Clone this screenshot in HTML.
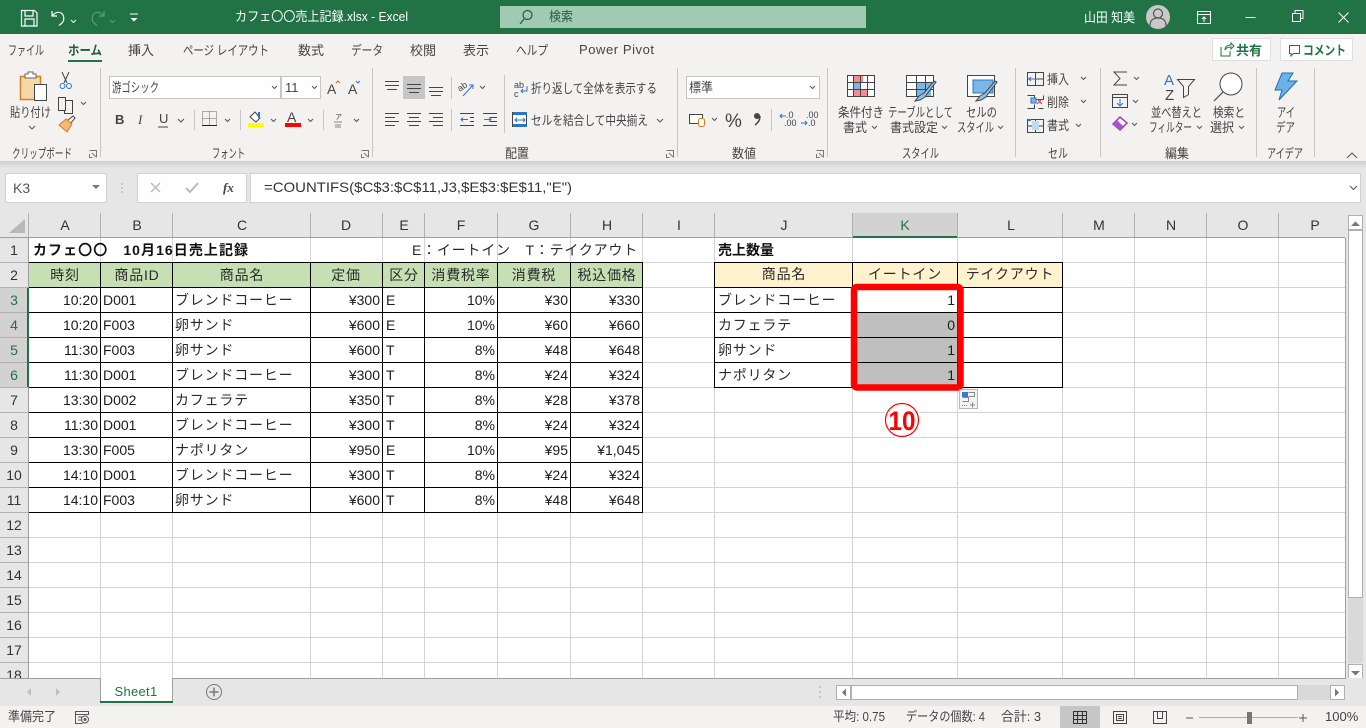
<!DOCTYPE html>
<html lang="ja"><head><meta charset="utf-8"><title>Excel</title>
<style>
html,body{margin:0;padding:0;width:1366px;height:728px;overflow:hidden;background:#e6e6e6}
svg{display:block}
text{font-family:"Liberation Sans","Noto Sans CJK JP",sans-serif;font-size:13px;fill:#444}
.t text{fill:#fff}
.c text{font-size:14px;fill:#1c1c1c}
.j text,text.j{font-family:"Liberation Sans","Noto Sans CJK JP",sans-serif;font-size:14px;letter-spacing:.8px;fill:#2a2a2a}
.r text{text-anchor:end}
.m text,text.m{text-anchor:middle}
.h text{font-size:14px;fill:#333;text-anchor:middle}
.ic{fill:none;stroke:#444;stroke-width:1}
.caret{fill:none;stroke:#555;stroke-width:1}
</style></head><body>
<svg xmlns="http://www.w3.org/2000/svg" width="1366" height="728" viewBox="0 0 1366 728">
<defs><linearGradient id="sh" x1="0" y1="0" x2="0" y2="1"><stop offset="0" stop-color="#cfcfcf"/><stop offset="1" stop-color="#e6e6e6"/></linearGradient></defs>
<!-- title bar -->
<rect width="1366" height="34" fill="#217346"/>
<g fill="none" stroke="#fff" stroke-width="1.2">
<path d="M21.5 10.5h13l2.500 2.500v13h-15.500z M25 10.500v5.500h8v-5.500 M25 26v-7h9v7"/>
<path d="M52 11v5h5 M52 16c3-3.500 6-4.500 9-3 3.500 2 3.500 7.500 1 10l-3 2.500"/>
<path d="M71 20l2.500 2.500 2.500-2.500" stroke-width="1"/>
<g stroke="#5f9a78"><path d="M104 11v5h-5 M104 16c-3-3.500-6-4.500-9-3-3.500 2-3.500 7.500-1 10l3 2.500"/><path d="M110 20l2.500 2.500 2.500-2.500" stroke-width="1"/></g>
<path d="M130 14h8" stroke-width="1"/><path d="M130.500 18l3.500 3.500 3.500-3.500z" fill="#fff" stroke="none"/>
</g>
<g class="t">
<text x="235" y="21" textLength="173" lengthAdjust="spacingAndGlyphs">カフェ〇〇売上記録.xlsx  -  Excel</text>
<rect x="500" y="6" width="366" height="22" fill="#a0cbb2"/>
<text x="549" y="21" textLength="24" lengthAdjust="spacingAndGlyphs" style="fill:#2a5a40">検索</text>
<text x="1084" y="22" textLength="51" lengthAdjust="spacingAndGlyphs">山田 知美</text>
</g>
<g fill="none" stroke="#235a3c" stroke-width="1.200"><circle cx="527.500" cy="15" r="4.500"/><path d="M524 19l-4 5"/></g>
<circle cx="1158" cy="17" r="12" fill="#c8c8c8"/>
<g fill="none" stroke="#555" stroke-width="1.200"><circle cx="1158" cy="13.500" r="4.500"/><path d="M1150 26c0-6 3-8 8-8s8 2 8 8"/></g>
<g fill="none" stroke="#fff" stroke-width="1">
<path d="M1197.500 11.500h13v12h-13z M1197.500 14.500h13 M1204 22v-5 M1202 19l2-2 2 2"/>
<path d="M1245.500 17.500h10"/>
<path d="M1292.500 13.500h8v8h-8z M1295 13v-2.500h8v8h-2.500"/>
<path d="M1338.500 12.500l10 10 M1348.500 12.500l-10 10"/>
</g>
<!-- ribbon -->
<rect y="34" width="1366" height="127" fill="#f3f2f1"/>
<rect y="161" width="1366" height="7" fill="url(#sh)"/>
<text x="8" y="55" textLength="36" lengthAdjust="spacingAndGlyphs">ファイル</text>
<text x="68" y="55" textLength="34" lengthAdjust="spacingAndGlyphs" font-weight="700" style="fill:#235c3d">ホーム</text>
<rect x="68" y="60" width="34" height="2" fill="#217346"/>
<text x="128" y="55" textLength="26" lengthAdjust="spacingAndGlyphs">挿入</text>
<text x="183" y="55" textLength="86" lengthAdjust="spacingAndGlyphs">ページ レイアウト</text>
<text x="298" y="55" textLength="26" lengthAdjust="spacingAndGlyphs">数式</text>
<text x="351" y="55" textLength="32" lengthAdjust="spacingAndGlyphs">データ</text>
<text x="410" y="55" textLength="26" lengthAdjust="spacingAndGlyphs">校閲</text>
<text x="463" y="55" textLength="26" lengthAdjust="spacingAndGlyphs">表示</text>
<text x="516" y="55" textLength="32" lengthAdjust="spacingAndGlyphs">ヘルプ</text>
<text x="579" y="54" textLength="75" lengthAdjust="spacing" style="font-size:13px">Power Pivot</text>
<rect x="1212.500" y="38.500" width="58" height="22" fill="#fff" stroke="#e1dfdd"/>
<rect x="1280.500" y="38.500" width="72" height="22" fill="#fff" stroke="#e1dfdd"/>
<path d="M1221 47v9h9v-5 M1225 50c0-3 2-5 6-5v-2l3 3-3 3v-2c-3 0-5 1-6 3z" fill="none" stroke="#217346"/>
<text x="1236" y="55" textLength="26" lengthAdjust="spacingAndGlyphs" font-weight="700" style="fill:#217346">共有</text>
<path d="M1289.500 45.500h10v8h-6l-2.500 2.500v-2.500h-1.500z" fill="none" stroke="#217346"/>
<text x="1303" y="55" textLength="43" lengthAdjust="spacingAndGlyphs" font-weight="700" style="fill:#217346">コメント</text>
<!-- separators -->
<g stroke="#c8c6c4"><path d="M100.500 68v89 M372.500 68v89 M677.500 68v89 M827.500 68v89 M1015.500 68v89 M1100.500 68v89 M1256.500 68v89 M1314.500 68v89"/>
<path d="M194.500 110v20 M240.500 110v20 M323.500 110v20 M451.500 77v22 M451.500 109v22 M504.500 75v58 M771.500 109v22"/></g>
<!-- group labels -->
<text x="12" y="158" textLength="60" lengthAdjust="spacingAndGlyphs">クリップボード</text>
<text x="212" y="158" textLength="33" lengthAdjust="spacingAndGlyphs">フォント</text>
<text x="505" y="158" textLength="24" lengthAdjust="spacingAndGlyphs">配置</text>
<text x="732" y="158" textLength="24" lengthAdjust="spacingAndGlyphs">数値</text>
<text x="902" y="158" textLength="37" lengthAdjust="spacingAndGlyphs">スタイル</text>
<text x="1048" y="158" textLength="20" lengthAdjust="spacingAndGlyphs">セル</text>
<text x="1165" y="158" textLength="24" lengthAdjust="spacingAndGlyphs">編集</text>
<text x="1267" y="158" textLength="36" lengthAdjust="spacingAndGlyphs">アイデア</text>
<g fill="none" stroke="#777"><path d="M89.500 150.500h7v7 M92 153l4 4M89.500 154v3.500h3"/><path d="M361.500 150.500h7v7 M364 153l4 4M361.500 154v3.500h3"/><path d="M666.500 150.500h7v7 M669 153l4 4M666.500 154v3.500h3"/><path d="M816.500 150.500h7v7 M819 153l4 4M816.500 154v3.500h3"/></g>
<path d="M1347 158l5-5 5 5" class="caret" stroke-width="1.200"/>
<!-- clipboard -->
<rect x="20.500" y="76.500" width="20" height="23" fill="#f4d9a8" stroke="#d67f1f" stroke-width="1.500"/>
<path d="M25 76v-2h3v-2h5v2h3v4h-11z" fill="#fff" stroke="#666"/>
<rect x="34.500" y="84.500" width="12" height="16" fill="#fff" stroke="#444"/>
<text x="10" y="117" textLength="41" lengthAdjust="spacingAndGlyphs">貼り付け</text>
<path d="M29 126l3 3 3-3" class="caret"/>
<path d="M62 72l5 11 M69 72l-5 11" class="ic"/><circle cx="62.500" cy="86" r="2.500" fill="none" stroke="#2a77c9"/><circle cx="69" cy="86" r="2.500" fill="none" stroke="#2a77c9"/>
<path d="M58.500 97.500h7v13h-7z M65.500 100.500h7v13h-8v-3" class="ic"/><path d="M81 102l2.500 2.500 2.500-2.500" class="caret"/>
<path d="M59 125l7-6 6 5-5 8z" fill="#f7b977" stroke="#d67f1f"/><path d="M68 120l5-4 2 2-4 5" fill="none" stroke="#444"/>
<!-- font -->
<rect x="109.500" y="76.500" width="171" height="22" fill="#fff" stroke="#c8c6c4"/>
<rect x="281.500" y="76.500" width="39" height="22" fill="#fff" stroke="#c8c6c4"/>
<text x="112" y="92" textLength="47" lengthAdjust="spacingAndGlyphs">游ゴシック</text>
<text x="285" y="92" style="font-size:13px">11</text>
<path d="M272 86l2.500 2.500 2.500-2.500 M312 86l2.500 2.500 2.500-2.500" class="caret"/>
<text x="327" y="94" style="font-size:14px">A</text><text x="348" y="94" style="font-size:14px">A</text>
<path d="M336 83l2-2 2 2" fill="none" stroke="#c36a1a"/><path d="M356 81l2 2 2-2" fill="none" stroke="#2a77c9"/>
<text x="115" y="124" font-weight="700" style="font-size:13px">B</text>
<text x="138" y="124" font-style="italic" style="font-family:'Liberation Serif',serif;font-size:13px">I</text>
<text x="159" y="123" style="font-size:13px">U</text><path d="M158 127h10" stroke="#444"/>
<path d="M178 119l3 3 3-3 M225 119l2.500 2.500 2.500-2.500 M271 119l2.500 2.500 2.500-2.500 M308 119l2.500 2.500 2.500-2.500 M354 119l2.500 2.500 2.500-2.500" class="caret"/>
<path d="M202.500 111.500h14v14h-14z M209.500 111.500v14 M202.500 118.500h14" fill="none" stroke="#666" stroke-dasharray="1 1"/><path d="M202 125.500h15" stroke="#222"/>
<path d="M250 117l5-5 5 6-4 4z" fill="#fff" stroke="#444"/><path d="M259 112v6" stroke="#2a77c9" stroke-width="2"/><rect x="248" y="123" width="16" height="4" fill="#ffff00"/>
<text x="287" y="122" style="font-size:14px">A</text><rect x="285" y="123" width="16" height="4" fill="#ff0000"/>
<text x="335" y="119" style="font-size:7px">ア</text><path d="M334 122h8 M335 125h6 M335 127h6" stroke="#888"/>
<!-- align -->
<rect x="403" y="76" width="22" height="23" fill="#c6c6c6"/>
<g stroke="#444"><path d="M385 81.500h14 M385 85.500h14 M387 89.500h10"/><path d="M407 84.500h14 M407 88.500h14 M409 92.500h10"/><path d="M429 87.500h14 M429 91.500h14 M431 95.500h10"/>
<path d="M385 113.500h14 M385 117.500h10 M385 121.500h14 M385 125.500h10"/><path d="M407 113.500h14 M409 117.500h10 M407 121.500h14 M409 125.500h10"/><path d="M429 113.500h14 M433 117.500h10 M429 121.500h14 M433 125.500h10"/>
<path d="M460 113.500h14 M474 125.500h-14 M474 117.500h-4 M474 121.500h-4" /><path d="M483 113.500h14 M483 125.500h14 M490 117.500h7 M490 121.500h7"/></g>
<path d="M468 119.500h-7m2-2-2 2 2 2" fill="none" stroke="#2a77c9"/><path d="M484 119.500h7m-2-2 2 2-2 2" fill="none" stroke="#2a77c9"/>
<text x="458" y="90" style="font-size:9px" transform="rotate(-35 462 88)">ab</text><path d="M463 96l10-11m-4 0h4v4" fill="none" stroke="#2a77c9"/>
<path d="M480 86l2.500 2.500 2.500-2.500" class="caret"/>
<text x="514" y="88" style="font-size:9px">ab</text><text x="514" y="97" style="font-size:9px">c</text><path d="M527 86v5h-6m2-2-2 2 2 2" fill="none" stroke="#2a77c9"/>
<text x="531" y="93" textLength="126" lengthAdjust="spacingAndGlyphs">折り返して全体を表示する</text>
<rect x="512.500" y="112.500" width="14" height="14" fill="#fff" stroke="#444"/><rect x="513" y="112" width="14" height="3" fill="#2a77c9"/><rect x="513" y="124" width="14" height="3" fill="#2a77c9"/><path d="M515 120h10m-2-2 2 2-2 2m-6-4-2 2 2 2" fill="none" stroke="#2a77c9"/>
<text x="531" y="125" textLength="117" lengthAdjust="spacingAndGlyphs">セルを結合して中央揃え</text>
<path d="M657 119l3 3 3-3" class="caret"/>
<!-- number -->
<rect x="686.500" y="76.500" width="133" height="22" fill="#fff" stroke="#c8c6c4"/>
<text x="689" y="92" textLength="24" lengthAdjust="spacingAndGlyphs">標準</text>
<path d="M810 86l2.500 2.500 2.500-2.500 M712 118l2.500 2.500 2.500-2.500" class="caret"/>
<rect x="689.500" y="114.500" width="13" height="9" fill="#fff" stroke="#444"/><rect x="698.500" y="118.500" width="6" height="8" rx="2" fill="#fff" stroke="#d67f1f"/>
<text x="725" y="127" style="font-size:19px">%</text>
<circle cx="757" cy="116" r="3" fill="#444"/><path d="M760 116c0 4-2 7-5 9" fill="none" stroke="#444" stroke-width="1.500"/>
<text x="786" y="118" style="font-size:9px">.0</text><text x="784" y="126" style="font-size:9px">.00</text><path d="M786 116h-6m2-2-2 2 2 2" fill="none" stroke="#2a77c9"/>
<text x="806" y="118" style="font-size:9px">.00</text><text x="808" y="126" style="font-size:9px">.0</text><path d="M801 123h6m-2-2 2 2-2 2" fill="none" stroke="#2a77c9"/>
<!-- styles -->
<g fill="none" stroke="#444">
<rect x="847.500" y="75.500" width="27" height="21" fill="#fff"/><rect x="853" y="76" width="10" height="6.500" fill="#f58a92" stroke="none"/><rect x="853" y="89" width="14" height="7" fill="#f58a92" stroke="none"/><rect x="853" y="83" width="7" height="6" fill="#7bb6e8" stroke="none"/><rect x="847.500" y="75.500" width="27" height="21"/><path d="M847.500 82.500h27 M847.500 89.500h27 M853.500 75.500v21 M860.500 75.500v21 M867.500 75.500v21"/>
<rect x="906.500" y="75.500" width="27" height="21" fill="#fff"/><rect x="916" y="83" width="15" height="13" fill="#7bb6e8" stroke="none"/><path d="M906.500 82.500h27 M906.500 89.500h27 M916.500 75.500v21 M925.500 75.500v21"/>
<rect x="967.500" y="75.500" width="27" height="21" fill="#fff"/><rect x="973" y="80" width="20" height="13" fill="#7bb6e8" stroke="#2a77c9"/>
</g>
<path d="M936 82l-2-1-10 12-5 3-4 5 5-1 5-3 2-3z" fill="#8ec1ea" stroke="#444"/>
<path d="M997 82l-2-1-10 12-5 3-4 5 5-1 5-3 2-3z" fill="#8ec1ea" stroke="#444"/>
<text x="838" y="117" textLength="46" lengthAdjust="spacingAndGlyphs">条件付き</text>
<text x="843" y="132" textLength="24" lengthAdjust="spacingAndGlyphs">書式</text>
<text x="888" y="117" textLength="65" lengthAdjust="spacingAndGlyphs">テーブルとして</text>
<text x="890" y="132" textLength="48" lengthAdjust="spacingAndGlyphs">書式設定</text>
<text x="966" y="117" textLength="31" lengthAdjust="spacingAndGlyphs">セルの</text>
<text x="957" y="132" textLength="37" lengthAdjust="spacingAndGlyphs">スタイル</text>
<path d="M872 126l2.500 2.500 2.500-2.500 M942 126l2.500 2.500 2.500-2.500 M998 126l2.500 2.500 2.500-2.500" class="caret"/>
<!-- cells -->
<g fill="none" stroke="#444"><path d="M1027.500 72.500h16v13h-16z M1027.500 79h16 M1035.500 72.500v13"/><path d="M1027.500 95.500h7v4h9v-4h-0 M1027.500 108.500h7v-4 M1043.500 108.500h-5"/><rect x="1027.500" y="119.500" width="16" height="13"/><path d="M1027.500 126h16 M1035.500 119.500v13"/></g>
<rect x="1028" y="119" width="3" height="2" fill="#2a77c9"/>
<path d="M1036 79h-7m2-2-2 2 2 2" fill="none" stroke="#2a77c9"/><rect x="1031" y="98" width="5" height="5" fill="#7bb6e8" stroke="#2a77c9"/><path d="M1037 99l5 5m0-5l-5 5" stroke="#e04040"/><rect x="1032" y="121" width="7" height="9" fill="#bcdcf4"/>
<text x="1047" y="84" textLength="22" lengthAdjust="spacingAndGlyphs">挿入</text>
<text x="1047" y="107" textLength="22" lengthAdjust="spacingAndGlyphs">削除</text>
<text x="1047" y="130" textLength="22" lengthAdjust="spacingAndGlyphs">書式</text>
<path d="M1081 77l2.500 2.500 2.500-2.500 M1081 100l2.500 2.500 2.500-2.500 M1076 124l2.500 2.500 2.500-2.500" class="caret"/>
<!-- editing -->
<path d="M1127 72h-13l6 6.500-6 6.500h13" class="ic"/>
<path d="M1112.500 94.500h15v13h-15z M1112.500 97.500h15" class="ic"/><path d="M1120 99v7m-3-3 3 3 3-3" fill="none" stroke="#2a77c9"/>
<path d="M1113 124l7-7 7 6-7 7z" fill="#fff" stroke="#9b3fb5" stroke-width="1.500"/><path d="M1113 124l4-4 6 6-3 4z" fill="#b04fd0"/>
<path d="M1134 77l2.500 2.500 2.500-2.500 M1133 100l2.500 2.500 2.500-2.500 M1132 123l2.500 2.500 2.500-2.500" class="caret"/>
<text x="1164" y="85" style="font-size:15px;fill:#2a77c9">A</text><text x="1165" y="100" style="font-size:15px">Z</text>
<path d="M1177.500 79.500h17l-6 7v8l-5 3v-11z" class="ic"/>
<text x="1151" y="117" textLength="51" lengthAdjust="spacingAndGlyphs">並べ替えと</text>
<text x="1149" y="132" textLength="43" lengthAdjust="spacingAndGlyphs">フィルター</text>
<circle cx="1231" cy="84" r="11" fill="#fff" stroke="#444"/><path d="M1223 92l-9 9" stroke="#444" stroke-width="1.200"/>
<text x="1213" y="117" textLength="32" lengthAdjust="spacingAndGlyphs">検索と</text>
<text x="1210" y="132" textLength="24" lengthAdjust="spacingAndGlyphs">選択</text>
<path d="M1197 126l2.500 2.500 2.500-2.500 M1239 126l2.500 2.500 2.500-2.500" class="caret"/>
<path d="M1290 73h-8l-7 17h7l-3 10 18-19h-9l5-8z" fill="#6cb1ea" stroke="#1f6fb8"/>
<text x="1277" y="117" textLength="18" lengthAdjust="spacingAndGlyphs">アイ</text>
<text x="1276" y="132" textLength="19" lengthAdjust="spacingAndGlyphs">デア</text>
<!-- formula bar -->
<rect x="5.500" y="173.500" width="101" height="29" fill="#fff" stroke="#d0d0d0"/>
<text x="13" y="193" style="font-size:14px;fill:#555">K3</text>
<path d="M92 185h8l-4 4z" fill="#777"/>
<path d="M122 183v2 M122 187v2 M122 191v2" stroke="#aaa"/>
<rect x="137.500" y="173.500" width="109" height="29" fill="#fff" stroke="#d0d0d0"/>
<path d="M151 183l9 9 M160 183l-9 9" stroke="#bbb" stroke-width="1.500"/>
<path d="M186 188l4 4 8-9" fill="none" stroke="#bbb" stroke-width="2"/>
<text x="223" y="192" font-style="italic" font-weight="700" style="font-family:'Liberation Serif',serif;font-size:13px">fx</text>
<rect x="250.500" y="173.500" width="1110" height="29" fill="#fff" stroke="#d0d0d0"/>
<text x="264" y="192" textLength="308" lengthAdjust="spacingAndGlyphs" style="font-size:14px;fill:#333">=COUNTIFS($C$3:$C$11,J3,$E$3:$E$11,"E")</text>
<path d="M1350 186l3.500 3.500 3.500-3.500" class="caret"/>
<!-- sheet -->
<rect x="29" y="238" width="1316" height="440" fill="#fff"/>
<rect x="0" y="213" width="1346" height="25" fill="#e6e6e6"/>
<rect x="0" y="238" width="28" height="440" fill="#e6e6e6"/>
<path d="M25 233h-16l16-14z" fill="#b8b8b8"/>
<rect x="853" y="213" width="104" height="24" fill="#d2d2d2"/>
<rect x="0" y="288" width="28" height="99" fill="#d2d2d2"/>
<!-- gridlines -->
<g stroke="#d4d4d4" shape-rendering="crispEdges">
<path d="M29 262.500h1316 M29 287.500h1316 M29 312.500h1316 M29 337.500h1316 M29 362.500h1316 M29 387.500h1316 M29 412.500h1316 M29 437.500h1316 M29 462.500h1316 M29 487.500h1316 M29 512.500h1316 M29 537.500h1316 M29 562.500h1316 M29 587.500h1316 M29 612.500h1316 M29 637.500h1316 M29 662.500h1316"/>
<path d="M100.500 238v440 M172.500 238v440 M310.500 238v440 M382.500 238v440 M424.500 238v440 M497.500 238v440 M570.500 238v440 M642.500 238v440 M714.500 238v440 M852.500 238v440 M957.500 238v440 M1062.500 238v440 M1134.500 238v440 M1206.500 238v440 M1278.500 238v440"/>
</g>
<g stroke="#b0b0b0" shape-rendering="crispEdges">
<path d="M28.500 213v25 M100.500 213v24 M172.500 213v24 M310.500 213v24 M382.500 213v24 M424.500 213v24 M497.500 213v24 M570.500 213v24 M642.500 213v24 M714.500 213v24 M852.500 213v24 M957.500 213v24 M1062.500 213v24 M1134.500 213v24 M1206.500 213v24 M1278.500 213v24"/>
<path d="M0 262.500h28 M0 287.500h28 M0 312.500h28 M0 337.500h28 M0 362.500h28 M0 387.500h28 M0 412.500h28 M0 437.500h28 M0 462.500h28 M0 487.500h28 M0 512.500h28 M0 537.500h28 M0 562.500h28 M0 587.500h28 M0 612.500h28 M0 637.500h28 M0 662.500h28"/>
</g>
<path d="M0 237.500h1345 M28.500 238v440 M1345.500 238v440" stroke="#9f9f9f" shape-rendering="crispEdges"/>
<rect x="853" y="236" width="104" height="2" fill="#217346"/>
<rect x="27" y="288" width="2" height="99" fill="#217346"/>
<!-- headers -->
<g class="h">
<text x="65" y="230">A</text><text x="137" y="230">B</text><text x="242" y="230">C</text><text x="346" y="230">D</text><text x="404" y="230">E</text><text x="461" y="230">F</text><text x="534" y="230">G</text><text x="607" y="230">H</text><text x="679" y="230">I</text><text x="784" y="230">J</text><text x="905" y="230" style="fill:#217346">K</text><text x="1011" y="230">L</text><text x="1099" y="230">M</text><text x="1171" y="230">N</text><text x="1243" y="230">O</text><text x="1315" y="230">P</text>
<text x="14" y="255">1</text><text x="14" y="280">2</text><text x="14" y="305" style="fill:#217346">3</text><text x="14" y="330" style="fill:#217346">4</text><text x="14" y="355" style="fill:#217346">5</text><text x="14" y="380" style="fill:#217346">6</text><text x="14" y="405">7</text><text x="14" y="430">8</text><text x="14" y="455">9</text><text x="14" y="480">10</text><text x="14" y="505">11</text><text x="14" y="530">12</text><text x="14" y="555">13</text><text x="14" y="580">14</text><text x="14" y="605">15</text><text x="14" y="630">16</text><text x="14" y="655">17</text><text x="14" y="680">18</text>
</g>
<!-- table fills -->
<rect x="29" y="263" width="614" height="24" fill="#c6e0b4"/>
<rect x="715" y="263" width="347" height="24" fill="#fff2cc"/>
<rect x="29" y="288" width="614" height="224" fill="#fff"/>
<rect x="715" y="288" width="347" height="99" fill="#fff"/>
<rect x="853" y="313" width="104" height="74" fill="#bfbfbf"/>
<!-- table borders -->
<g stroke="#000" shape-rendering="crispEdges">
<path d="M29 262.500h614 M29 287.500h614 M29 312.500h614 M29 337.500h614 M29 362.500h614 M29 387.500h614 M29 412.500h614 M29 437.500h614 M29 462.500h614 M29 487.500h614 M29 512.500h614"/>
<path d="M100.500 262v251 M172.500 262v251 M310.500 262v251 M382.500 262v251 M424.500 262v251 M497.500 262v251 M570.500 262v251 M642.500 262v251"/>
<path d="M714 262.500h349 M714 287.500h349 M714 312.500h349 M714 337.500h349 M714 362.500h349 M714 387.500h349"/>
<path d="M714.500 262v126 M852.500 262v126 M957.500 262v126 M1062.500 262v126"/>
</g>
<!-- text: title rows -->
<text x="33" y="255" font-weight="700" textLength="215" lengthAdjust="spacing" style="font-size:14px;fill:#111">カフェ〇〇　10月16日売上記録</text>
<text x="412" y="255" textLength="226" class="j">E：イートイン　T：テイクアウト</text>
<text x="718" y="255" font-weight="700" style="font-size:14px;fill:#111">売上数量</text>
<g class="j m">
<text x="65" y="280">時刻</text><text x="137" y="280">商品ID</text><text x="242" y="280">商品名</text><text x="346" y="280">定価</text><text x="404" y="280">区分</text><text x="461" y="280">消費税率</text><text x="534" y="280">消費税</text><text x="607" y="280">税込価格</text>
<text x="784" y="279">商品名</text><text x="905" y="279">イートイン</text><text x="1010" y="279">テイクアウト</text>
</g>
<g class="c r"><text x="98" y="305">10:20</text><text x="98" y="330">10:20</text><text x="98" y="355">11:30</text><text x="98" y="380">11:30</text><text x="98" y="405">13:30</text><text x="98" y="430">11:30</text><text x="98" y="455">13:30</text><text x="98" y="480">14:10</text><text x="98" y="505">14:10</text></g>
<g class="c"><text x="103" y="305">D001</text><text x="103" y="330">F003</text><text x="103" y="355">F003</text><text x="103" y="380">D001</text><text x="103" y="405">D002</text><text x="103" y="430">D001</text><text x="103" y="455">F005</text><text x="103" y="480">D001</text><text x="103" y="505">F003</text></g>
<g class="j" transform="translate(0,.8)"><text x="175" y="304">ブレンドコーヒー</text><text x="175" y="329">卵サンド</text><text x="175" y="354">卵サンド</text><text x="175" y="379">ブレンドコーヒー</text><text x="175" y="404">カフェラテ</text><text x="175" y="429">ブレンドコーヒー</text><text x="175" y="454">ナポリタン</text><text x="175" y="479">ブレンドコーヒー</text><text x="175" y="504">卵サンド</text></g>
<g class="c r"><text x="380" y="305">¥300</text><text x="380" y="330">¥600</text><text x="380" y="355">¥600</text><text x="380" y="380">¥300</text><text x="380" y="405">¥350</text><text x="380" y="430">¥300</text><text x="380" y="455">¥950</text><text x="380" y="480">¥300</text><text x="380" y="505">¥600</text></g>
<g class="c"><text x="386" y="305">E</text><text x="386" y="330">E</text><text x="386" y="355">T</text><text x="386" y="380">T</text><text x="386" y="405">T</text><text x="386" y="430">T</text><text x="386" y="455">E</text><text x="386" y="480">T</text><text x="386" y="505">T</text></g>
<g class="c r"><text x="495" y="305">10%</text><text x="495" y="330">10%</text><text x="495" y="355">8%</text><text x="495" y="380">8%</text><text x="495" y="405">8%</text><text x="495" y="430">8%</text><text x="495" y="455">10%</text><text x="495" y="480">8%</text><text x="495" y="505">8%</text></g>
<g class="c r"><text x="568" y="305">¥30</text><text x="568" y="330">¥60</text><text x="568" y="355">¥48</text><text x="568" y="380">¥24</text><text x="568" y="405">¥28</text><text x="568" y="430">¥24</text><text x="568" y="455">¥95</text><text x="568" y="480">¥24</text><text x="568" y="505">¥48</text></g>
<g class="c r"><text x="640" y="305">¥330</text><text x="640" y="330">¥660</text><text x="640" y="355">¥648</text><text x="640" y="380">¥324</text><text x="640" y="405">¥378</text><text x="640" y="430">¥324</text><text x="640" y="455">¥1,045</text><text x="640" y="480">¥324</text><text x="640" y="505">¥648</text></g>
<g class="j" transform="translate(0,.8)"><text x="718" y="304">ブレンドコーヒー</text><text x="718" y="329">カフェラテ</text><text x="718" y="354">卵サンド</text><text x="718" y="379">ナポリタン</text></g>
<g class="c r"><text x="955" y="305">1</text><text x="955" y="330">0</text><text x="955" y="355">1</text><text x="955" y="380">1</text></g>
<!-- annotation -->
<rect x="854" y="287" width="106.500" height="100.500" rx="3" fill="none" stroke="#ff0000" stroke-width="6.500"/>
<rect x="959.500" y="389.500" width="18" height="19" fill="#f3f2f1" stroke="#b8b8b8"/>
<rect x="962" y="392" width="6" height="5" fill="#3f74d6"/><path d="M968.500 392.500h6v4h-6 M962.500 397.500h6v4h-6" fill="none" stroke="#888"/><path d="M962 405.500h6" stroke="#888" stroke-dasharray="1 1"/><path d="M970 405h5 M972.500 402.500v5" stroke="#888"/>
<circle cx="902" cy="420" r="19" fill="#fff"/>
<circle cx="902" cy="420" r="16.500" fill="#fff" stroke="#ff0000" stroke-width="1.200"/>
<text x="902" y="430" class="m" font-weight="700" textLength="27" lengthAdjust="spacingAndGlyphs" style="font-size:27px;fill:#ff0000">10</text>
<!-- v scrollbar -->
<rect x="1346" y="213" width="20" height="465" fill="#e6e6e6"/>
<rect x="1348" y="215" width="15" height="448" fill="#d9d9d9"/>
<rect x="1348.500" y="215.500" width="14" height="14" fill="#fff" stroke="#b0b0b0"/>
<path d="M1351 226l4.500-4.500 4.500 4.500z" fill="#777"/>
<rect x="1348.500" y="230.500" width="14" height="367" fill="#fff" stroke="#b0b0b0"/>
<rect x="1348.500" y="664.500" width="14" height="14" fill="#fff" stroke="#b0b0b0"/>
<path d="M1351 671l4.500 4.500 4.500-4.500z" fill="#777"/>
<!-- tabs -->
<rect y="678" width="1366" height="28" fill="#e6e6e6"/>
<path d="M0 678.500h1346" stroke="#9f9f9f" shape-rendering="crispEdges"/>
<path d="M31 688l-4 4 4 4z M56 688l4 4-4 4z" fill="#c0c0c0"/>
<path d="M100.500 678v24.500h72v-24.500" fill="#fff" stroke="#9f9f9f"/>
<rect x="100" y="701" width="73" height="2" fill="#217346"/>
<text x="136" y="696" class="m" style="font-size:13px;fill:#217346;letter-spacing:.3px">Sheet1</text>
<circle cx="214" cy="692" r="7.500" fill="none" stroke="#777"/><path d="M209.500 692h9 M214 687.500v9" stroke="#777" stroke-width="1.500"/>
<path d="M820 686v2 M820 691v2 M820 696v2" stroke="#aaa"/>
<rect x="836" y="685" width="509" height="15" fill="#d9d9d9"/>
<rect x="836.500" y="685.500" width="14" height="14" fill="#fff" stroke="#b0b0b0"/>
<path d="M846 688.500l-4 4 4 4z" fill="#777"/>
<rect x="851.500" y="685.500" width="446" height="14" fill="#fff" stroke="#b0b0b0"/>
<rect x="1330.500" y="685.500" width="14" height="14" fill="#fff" stroke="#b0b0b0"/>
<path d="M1335 688.500l4 4-4 4z" fill="#777"/>
<!-- status -->
<rect y="706" width="1366" height="22" fill="#f3f2f1"/>
<text x="8" y="721" textLength="48" lengthAdjust="spacingAndGlyphs">準備完了</text>
<path d="M75.500 711.500h13v3h-13z M75.500 714.500v9h7 M78 717h6 M78 720h4" fill="none" stroke="#555"/><circle cx="85" cy="719.500" r="3.500" fill="#f3f2f1" stroke="#555"/><circle cx="85" cy="719.500" r="1.500" fill="#555"/>
<text x="833" y="721" textLength="52" lengthAdjust="spacingAndGlyphs">平均: 0.75</text>
<text x="906" y="721" textLength="79" lengthAdjust="spacingAndGlyphs">データの個数: 4</text>
<text x="1001" y="721" textLength="40" lengthAdjust="spacingAndGlyphs">合計: 3</text>
<rect x="1060" y="706" width="40" height="22" fill="#c6c6c6"/>
<path d="M1073.500 711.500h13v12h-13z M1077.500 711.500v12 M1082.500 711.500v12 M1073.500 715.500h13 M1073.500 719.500h13" fill="none" stroke="#333"/>
<path d="M1113.500 711.500h13v12h-13z M1116.500 714.500h7v6h-7z M1118 716.500h4 M1118 718.500h4" fill="none" stroke="#444"/>
<path d="M1153.500 711.500h13v12h-13z M1157.500 711.500v7h5v-7" fill="none" stroke="#444"/>
<path d="M1186 718h7 M1299 718h8 M1303 714v8" stroke="#555"/>
<path d="M1199 717.500h99" stroke="#aaa"/>
<rect x="1247" y="712" width="5" height="12" fill="#777"/>
<text x="1325" y="721" style="font-size:13px">100%</text>
</svg>
</body></html>
